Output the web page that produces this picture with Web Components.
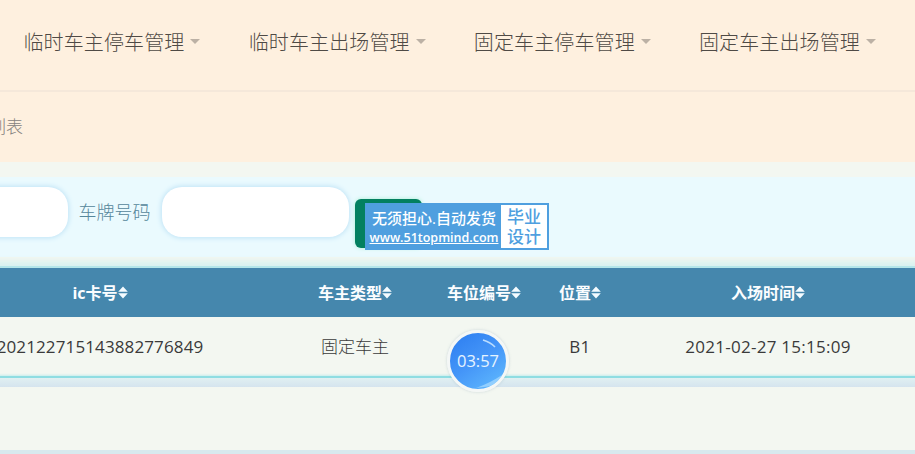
<!DOCTYPE html>
<html lang="zh-CN"><head><meta charset="utf-8"><title>车主列表</title>
<style>
html,body{margin:0;height:454px;overflow:hidden;background:#fef0df;font-family:"Open Sans","Noto Sans CJK SC",sans-serif}
</style></head><body>
<x-page>
  <x-nav>
    <x-nav-item>临时车主停车管理</x-nav-item>
    <x-nav-item>临时车主出场管理</x-nav-item>
    <x-nav-item>固定车主停车管理</x-nav-item>
    <x-nav-item>固定车主出场管理</x-nav-item>
  </x-nav>
  <x-crumb>列表</x-crumb>
  <x-search></x-search>
  <x-table></x-table>
</x-page>
<x-timer>03:57</x-timer>
<x-ad></x-ad>
<script>
const def=(name,html)=>customElements.define(name,class extends HTMLElement{
  constructor(){super();this.attachShadow({mode:'open'}).innerHTML=html;}
});
const CJK='"Open Sans","Noto Sans CJK SC",sans-serif';
def('x-page',`<style>:host{display:flex;flex-direction:column;width:915px;height:454px;overflow:hidden}</style><slot></slot>`);
def('x-nav',`<style>:host{display:flex;align-items:center;gap:48.2px;flex:none;height:85px;padding:0 0 5px 23.5px;border-bottom:2px solid #f5e8da;background:#fef0df}</style><slot></slot>`);
def('x-nav-item',`<style>:host{display:inline-flex;align-items:center;gap:6px;font:300 20px/28px ${CJK};letter-spacing:.12px;color:#4f4a45;white-space:nowrap}
i{display:block;width:0;height:0;border:5.5px solid transparent;border-top:5.5px solid #bcb1a5;border-bottom:0;margin-bottom:3px}</style><slot></slot><i></i>`);
def('x-crumb',`<style>:host{display:block;flex:none;height:70px;box-sizing:border-box;padding-top:23px;background:#fef0df;font:300 17px/24px ${CJK};color:#85827e;margin-left:-11px}</style><slot></slot>`);
def('x-field',`<style>:host{display:block;height:50px;box-sizing:border-box;background:#fff;border-radius:20px;box-shadow:0 0 5px 1px #bfe3f6}</style>`);
def('x-search',`<style>:host{display:flex;flex:none;align-items:flex-start;height:104px;box-sizing:border-box;background:linear-gradient(#f3f7f1 15px,#eafafe 15px,#eafafe 95px,#f3f7f1 95px)}
.row{display:flex;align-items:flex-start;margin:25px 0 0 -40px}
span{font:300 18px/24px ${CJK};color:#55879b;margin:13px 11px 0 10.5px;white-space:nowrap}
x-field.a{width:108px}x-field.b{width:187px}
button{display:block;width:67px;height:49px;margin:12px 0 0 6px;border:0;border-radius:6px;background:#038060;box-shadow:0 0 4px #a9efd6;padding:0}
</style><div class="row"><x-field class="a"></x-field><span>车牌号码</span><x-field class="b"></x-field><button aria-label="搜索"></button></div>`);
const up='<svg width="10" height="13" viewBox="0 0 10 13" aria-hidden="true"><path d="M5 .6 9.8 5.7H.2zM.2 7.3H9.8L5 12.4z" fill="#f4fbff"/></svg>';
def('x-table',`<style>:host{display:block;flex:none;margin-left:-90px;width:1014px;position:relative}
.g{display:grid;grid-template-columns:380px 130px 128px 64px 312px;align-items:center;justify-items:center}
.h{height:49px;background:#4587ad;border-top:2px solid #b4e6ea;box-shadow:0 -5px 6px #d8f2f0;color:#fbfdff;font:700 16px/22px ${CJK}}
.h div{display:flex;align-items:center;white-space:nowrap}
.r{height:59px;background:#f3f7f1;color:#3a3a3a;font:300 17px/24px ${CJK};white-space:nowrap}
.d{letter-spacing:.28px;font-weight:400}
.n{letter-spacing:.12px;font-weight:400}
.l{height:9px;background:linear-gradient(#e0f0f2,#d5e4ee);border-top:2px solid #8fdde2;box-shadow:0 -1px 2px #c5ecec}
.e{height:63px;background:#f3f7f1}
.f{height:4px;background:#d8e9ee}
</style>
<div class="g h"><div>ic卡号${up}</div><div>车主类型${up}</div><div>车位编号${up}</div><div>位置${up}</div><div>入场时间${up}</div></div>
<div class="g r"><div class="n">202122715143882776849</div><div>固定车主</div><div></div><div class="d">B1</div><div class="d">2021-02-27 15:15:09</div></div>
<div class="l"></div><div class="e"></div><div class="f"></div>`);
def('x-timer',`<style>:host{position:absolute;left:447px;top:330px;width:56px;height:56px;border-radius:50%;border:3px solid #f4f7f6;box-shadow:0 0 3px rgba(120,150,170,.35);background:linear-gradient(145deg,#2b7cf0,#4596f8 50%,#62bdfe);color:#e6f4ff;font:16.5px/56px ${CJK};text-align:center;overflow:hidden}
svg{position:absolute;inset:0}span{position:relative}</style>
<svg width="56" height="56" viewBox="0 0 56 56" fill="none" aria-hidden="true"><path d="M33 7 Q40 9 45 14" stroke="#b9dcff" stroke-width="1.6"/><path d="M26 55 Q40 50 52 42 L50 52 Z" fill="#a9dcff" opacity=".7"/></svg><span><slot></slot></span>`);
def('x-ad',`<style>:host{position:absolute;left:365px;top:203px;width:184px;height:47px;box-sizing:border-box;border:2px solid #4f9fdf;background:#4f9fdf;display:flex;color:#fff}
.l{flex:1;display:flex;flex-direction:column;align-items:center;justify-content:center;gap:1px}
.a{font:500 15px/20px ${CJK};white-space:nowrap}
.b{font:600 12.5px/17px ${CJK};text-decoration:underline;white-space:nowrap}
.r{width:46px;background:#fff;color:#4f9fdf;font:500 17px/20px ${CJK};text-align:center;display:flex;align-items:center;justify-content:center}</style>
<div class="l"><div class="a">无须担心.自动发货</div><div class="b">www.51topmind.com</div></div><div class="r">毕业<br>设计</div>`);
</script>
</body></html>
